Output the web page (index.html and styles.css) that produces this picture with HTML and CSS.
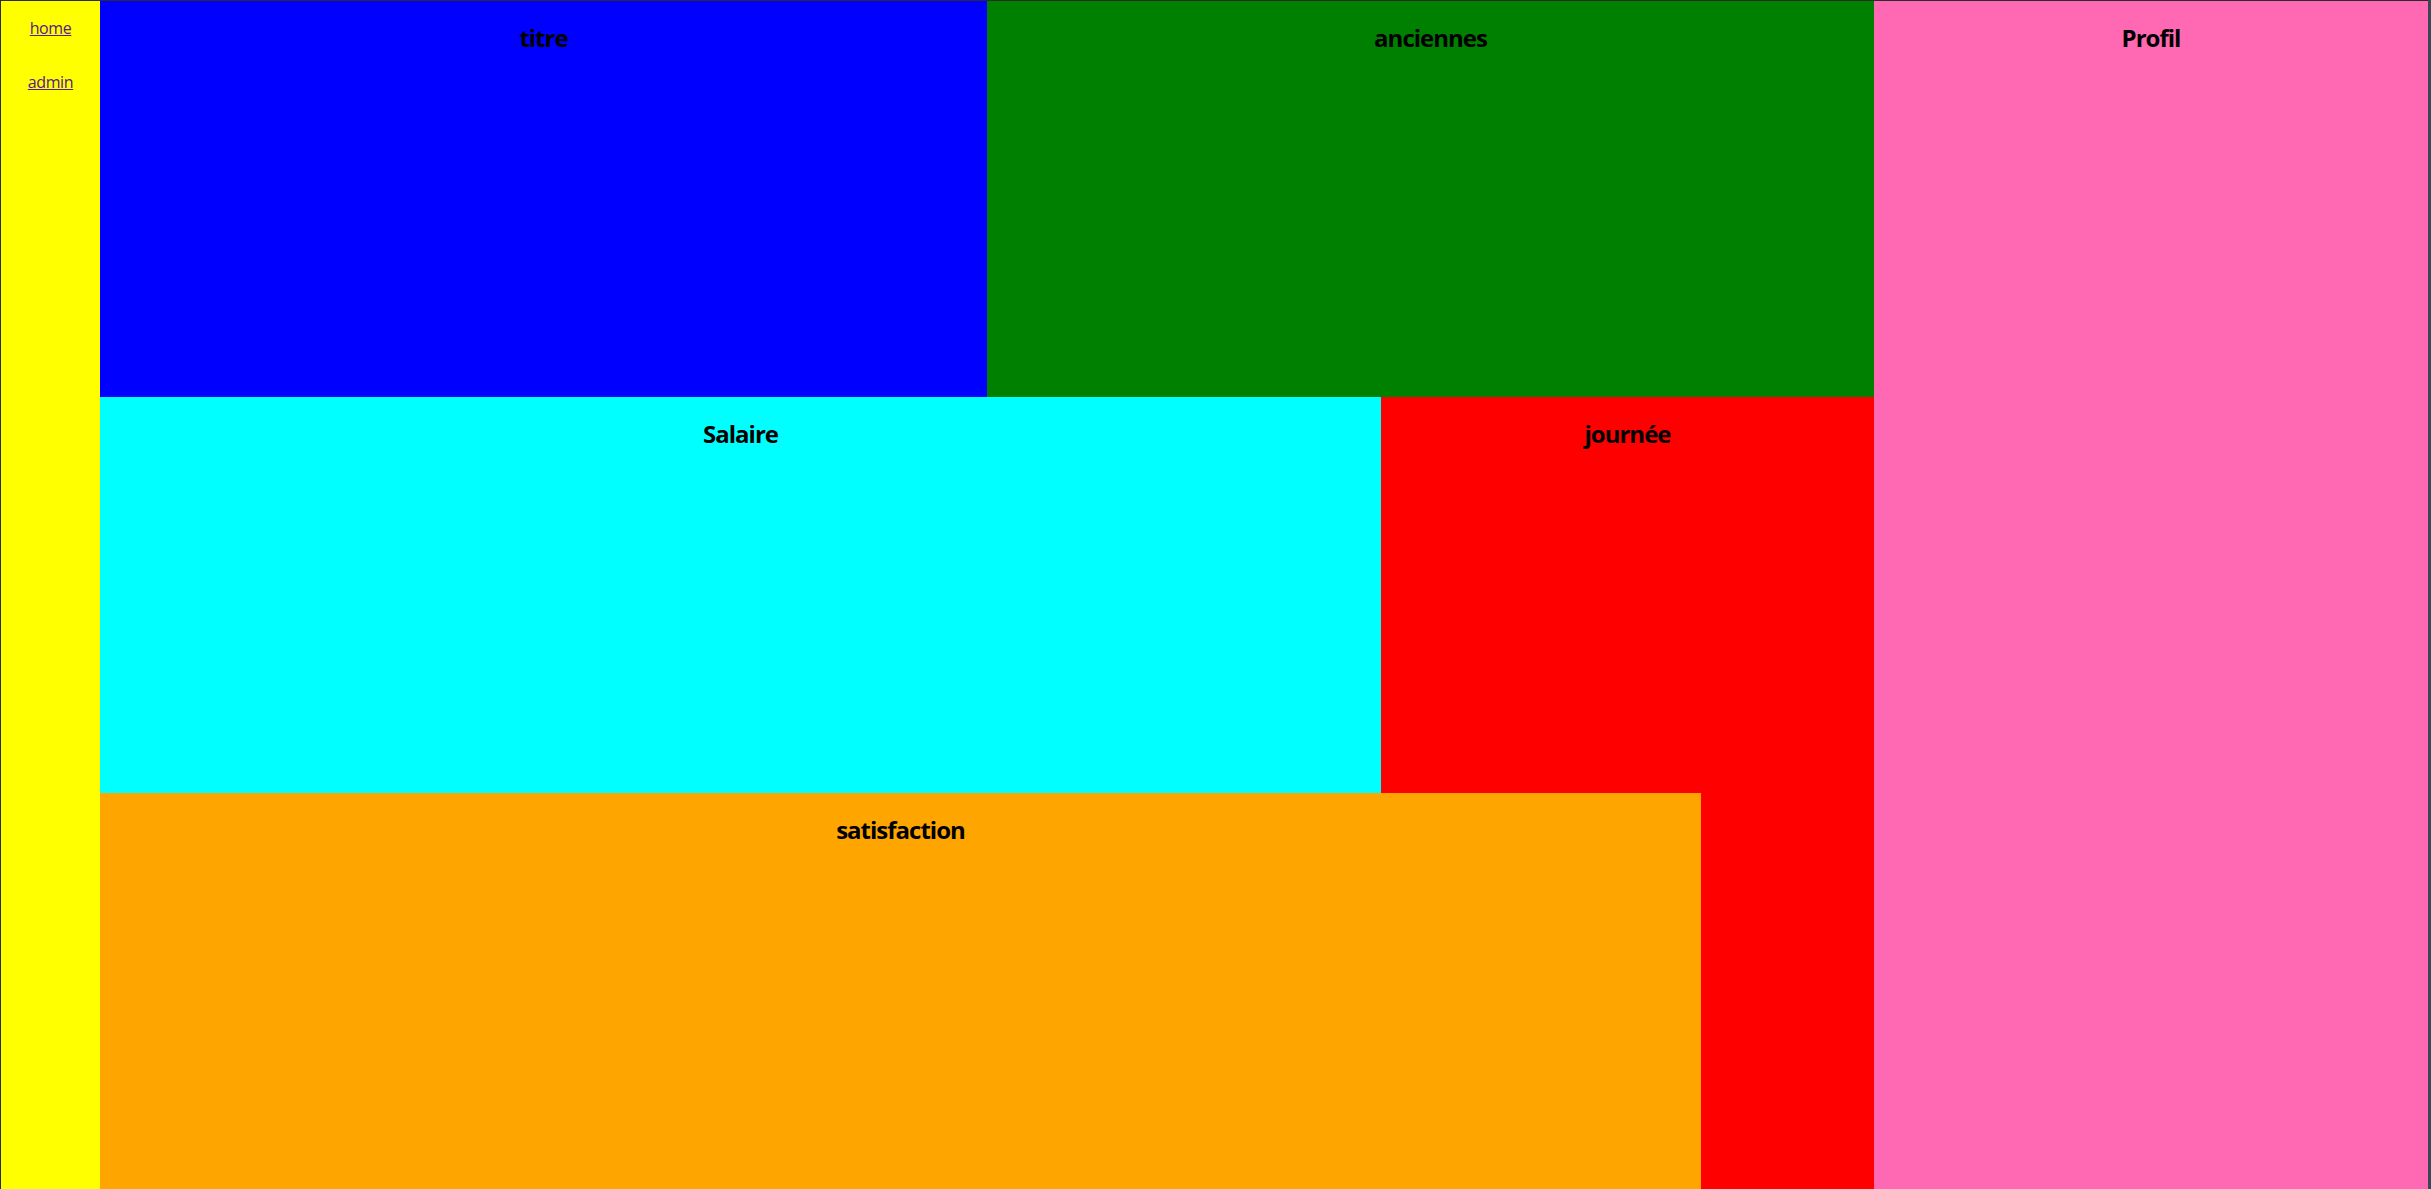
FILE: index.html
```html
<!DOCTYPE html>
<html lang="fr">
<head>
<meta charset="utf-8">
<title>Tableau de bord</title>
<link rel="stylesheet" href="styles.css">
</head>
<body>
<div class="frame">
  <nav class="sidebar">
    <a class="nav-link" href="#home">home</a>
    <a class="nav-link" href="#admin">admin</a>
  </nav>
  <main class="board">
    <section class="tile tile-titre"><h2 class="tile-title">titre</h2></section>
    <section class="tile tile-anciennes"><h2 class="tile-title">anciennes</h2></section>
    <section class="tile tile-profil"><h2 class="tile-title">Profil</h2></section>
    <section class="tile tile-salaire"><h2 class="tile-title">Salaire</h2></section>
    <section class="tile tile-journee"><h2 class="tile-title">journée</h2></section>
    <section class="tile tile-satisfaction"><h2 class="tile-title">satisfaction</h2></section>
  </main>
</div>
</body>
</html>
```
FILE: styles.css
```css
html, body {
  margin: 0;
  padding: 0;
  height: 100%;
  overflow: hidden;
}
body {
  background: #3b4656;
  font-family: "Segoe UI", "Open Sans", "Noto Sans", sans-serif;
}
.frame {
  display: flex;
  height: 1188px;
  border-top: 1px solid #2b2b2b;
  border-left: 1px solid #2b2b2b;
  margin-right: 3px;
}
.sidebar {
  width: 99px;
  flex: none;
  background: #ffff00;
  display: flex;
  flex-direction: column;
  align-items: center;
  gap: 32px;
  padding-top: 16px;
  box-sizing: border-box;
}
.nav-link {
  display: block;
  font-size: 16px;
  line-height: 22px;
  letter-spacing: -0.4px;
  color: #551a8b;
  text-decoration: underline;
}
.board {
  flex: 1;
  display: grid;
  grid-template-columns: 887fr 394fr 320fr 173fr 554fr;
  grid-template-rows: 396px 396px 396px;
}
.tile {
  text-align: center;
  overflow: hidden;
}
.tile-title {
  margin: 21px 0 0;
  font-size: 24px;
  line-height: 32px;
  font-weight: 700;
  letter-spacing: -1px;
  color: #000;
}
.tile-titre { grid-column: 1; grid-row: 1; background: #0000ff; }
.tile-anciennes { grid-column: 2 / 5; grid-row: 1; background: #008000; }
.tile-profil { grid-column: 5; grid-row: 1 / 4; background: #ff69b4; }
.tile-salaire { grid-column: 1 / 3; grid-row: 2; background: #00ffff; }
.tile-journee { grid-column: 3 / 5; grid-row: 2 / 4; background: #ff0000; }
.tile-satisfaction { grid-column: 1 / 4; grid-row: 3; background: #ffa500; }
```
